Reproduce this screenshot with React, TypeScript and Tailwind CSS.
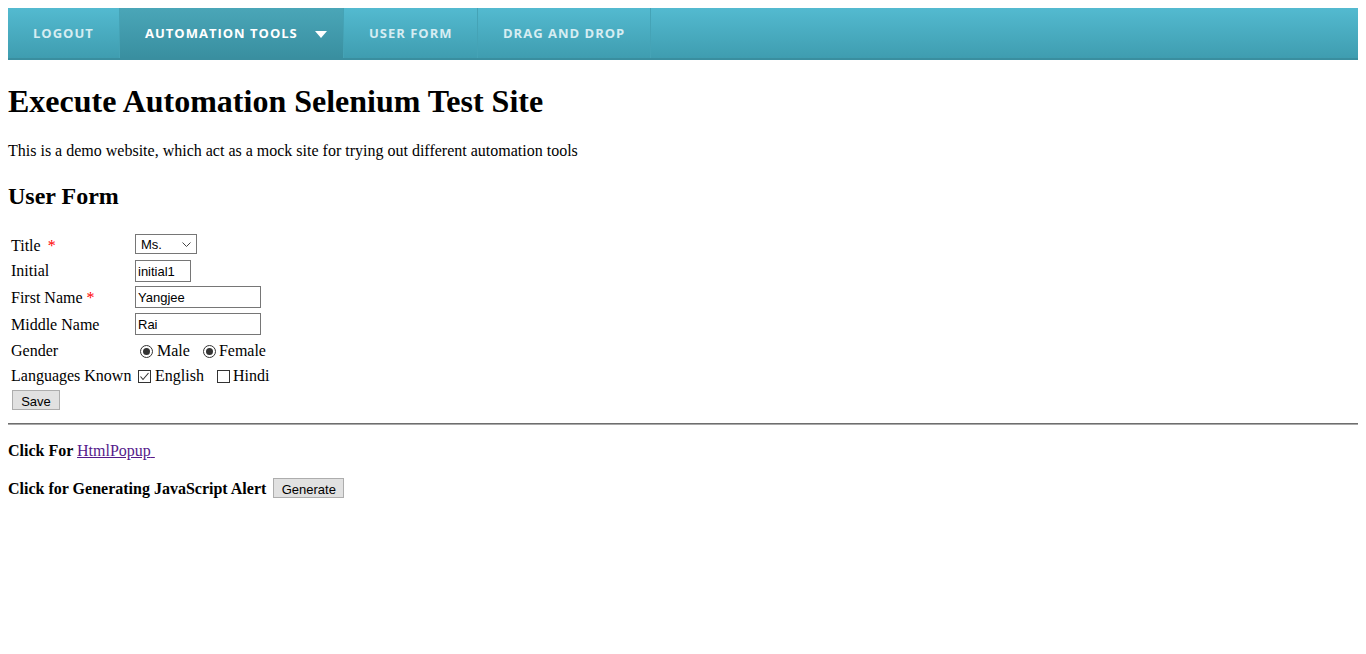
import { useState } from 'react'

const menu = [
  { label: 'Logout', w: 'w-[112px]', active: false, arrow: false },
  { label: 'Automation Tools', w: 'w-[224px]', active: true, arrow: true },
  { label: 'User Form', w: 'w-[134px]', active: false, arrow: false },
  { label: 'Drag and Drop', w: 'w-[173px]', active: false, arrow: false },
]

const sans = "font-['Liberation_Sans',Arial,sans-serif]"

function Radio({ checked }: { checked: boolean }) {
  return (
    <span className="flex h-[13px] w-[13px] items-center justify-center rounded-full border border-[#333] bg-white">
      {checked && <span className="h-[7px] w-[7px] rounded-full bg-[#333]" />}
    </span>
  )
}

function Check({ checked, onClick }: { checked: boolean; onClick: () => void }) {
  return (
    <span onClick={onClick} className="flex h-[13px] w-[13px] items-center justify-center border border-[#333] bg-white">
      {checked && (
        <svg width="11" height="11" viewBox="0 0 11 11">
          <path d="M1.5 5.5 L4 8.5 L9.5 2" fill="none" stroke="#333" strokeWidth="1.1" />
        </svg>
      )}
    </span>
  )
}

export default function App() {
  const [english, setEnglish] = useState(true)
  const [hindi, setHindi] = useState(false)

  return (
    <div className="min-h-screen bg-white p-2 font-['Liberation_Serif','Times_New_Roman',serif] text-base text-black">
      {/* Top menu */}
      <nav className="flex h-[52px] border-b-2 border-[#3a8e9f] bg-linear-to-b from-[#53bad0] to-[#3f9db0] font-['Open_Sans',sans-serif] text-[13px] font-bold uppercase tracking-[1px]">
        {menu.map((m) => (
          <a
            key={m.label}
            href="#"
            className={`flex h-full items-center border-r border-[#45a3b6] pl-[25px] pt-[2px] ${m.w} ${
              m.active ? 'bg-linear-to-b from-[#4aa6b8] to-[#398fa0] text-white' : 'text-[#d6edf2]'
            }`}
          >
            {m.label}
            {m.arrow && (
              <svg className="ml-[17px]" width="12" height="7" viewBox="0 0 12 7">
                <path d="M0 0 H12 L6 7 Z" fill="#fff" />
              </svg>
            )}
          </a>
        ))}
      </nav>

      <h1 className="mt-[23px] text-[32px] font-bold leading-[37px]">Execute Automation Selenium Test Site</h1>
      <p className="mt-[22px] leading-[18px]">
        This is a demo website, which act as a mock site for trying out different automation tools
      </p>
      <h2 className="mt-[22px] text-[24px] font-bold leading-[28px]">User Form</h2>

      {/* Form table */}
      <div className="mt-[24px] flex flex-col pl-[3px] leading-[18px]">
        <div className="flex h-[20px] items-center">
          <span className="mt-[4px] w-[124px]">
            Title <span className="ml-[3px] text-[#ff0000]">*</span>
          </span>
          <div className={`relative h-[20px] w-[62px] border border-[#767676] bg-white ${sans} text-[13px]`}>
            <span className="absolute left-[5px] top-[1px]">Ms.</span>
            <svg className="absolute right-[5px] top-[7px]" width="9" height="5" viewBox="0 0 9 5">
              <path d="M0.5 0.5 L4.5 4.5 L8.5 0.5" fill="none" stroke="#444" strokeWidth="1" />
            </svg>
          </div>
        </div>

        <div className="mt-[6px] flex h-[22px] items-center">
          <span className="w-[124px]">Initial</span>
          <input
            defaultValue="initial1"
            className={`h-[22px] w-[56px] border border-[#767676] px-[2px] ${sans} text-[13px] outline-none`}
          />
        </div>

        <div className="mt-[4px] flex h-[22px] items-center">
          <span className="mt-[2px] w-[124px]">
            First Name <span className="text-[#ff0000]">*</span>
          </span>
          <input
            defaultValue="Yangjee"
            className={`h-[22px] w-[126px] border border-[#767676] px-[2px] ${sans} text-[13px] outline-none`}
          />
        </div>

        <div className="mt-[5px] flex h-[22px] items-center">
          <span className="mt-[2px] w-[124px]">Middle Name</span>
          <input
            defaultValue="Rai"
            className={`h-[22px] w-[126px] border border-[#767676] px-[2px] ${sans} text-[13px] outline-none`}
          />
        </div>

        <div className="mt-[5px] flex h-[22px] items-center">
          <span className="w-[129px]">Gender</span>
          <Radio checked />
          <span className="ml-[4px]">Male</span>
          <span className="ml-[13px]">
            <Radio checked />
          </span>
          <span className="ml-[3px]">Female</span>
        </div>

        <div className="mt-[3px] flex h-[22px] items-center">
          <span className="w-[127px]">Languages Known</span>
          <Check checked={english} onClick={() => setEnglish(!english)} />
          <span className="ml-[4px]">English</span>
          <span className="ml-[13px]">
            <Check checked={hindi} onClick={() => setHindi(!hindi)} />
          </span>
          <span className="ml-[3px]">Hindi</span>
        </div>

        <div className="mt-[3px] flex h-[20px] items-center">
          <button className={`ml-px h-[20px] w-[48px] border border-[#adadad] bg-[#e1e1e1] pt-[2px] ${sans} text-[13px]`}>
            Save
          </button>
        </div>
      </div>

      <hr className="mt-[13px] border-t border-b border-t-[#6e6e6e] border-b-[#a8a8a8]" />

      <p className="mt-[17px] leading-[18px] font-bold">
        Click For{' '}
        <a href="#" className="font-normal text-[#551a8b] underline">
          HtmlPopup{'\u00a0'}
        </a>
      </p>

      <div className="mt-[18px] flex h-[20px] items-center leading-[18px]">
        <span className="mt-[2px] font-bold">Click for Generating JavaScript Alert</span>
        <button className={`ml-[7px] h-[20px] w-[71px] border border-[#adadad] bg-[#e1e1e1] pt-[2px] ${sans} text-[13px]`}>
          Generate
        </button>
      </div>
    </div>
  )
}
